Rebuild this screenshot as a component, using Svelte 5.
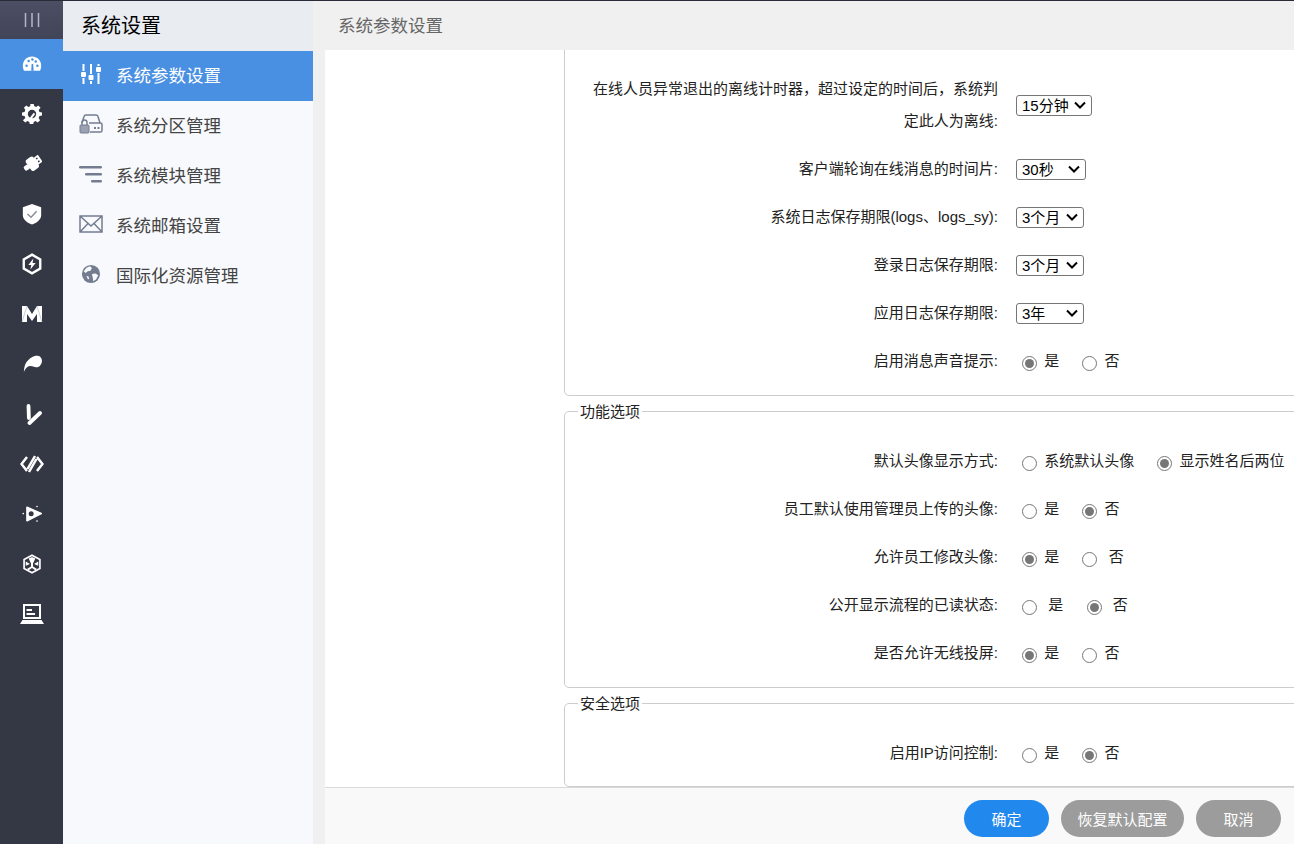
<script>
  const menu = [
    { name: '系统参数设置', icon: 'sliders', active: true },
    { name: '系统分区管理', icon: 'drive' },
    { name: '系统模块管理', icon: 'filter' },
    { name: '系统邮箱设置', icon: 'mail' },
    { name: '国际化资源管理', icon: 'globe' }
  ];

  const general = [
    { label: '在线人员异常退出的离线计时器\uFF0C超过设定的时间后\uFF0C系统判定此人为离线:', value: '15分钟', cls: 'w76', options: ['5分钟', '15分钟', '30分钟'] },
    { label: '客户端轮询在线消息的时间片:', value: '30秒', cls: 'w70', options: ['10秒', '30秒', '60秒'] },
    { label: '系统日志保存期限(logs、logs_sy):', value: '3个月', cls: 'w68', options: ['1个月', '3个月', '6个月'] },
    { label: '登录日志保存期限:', value: '3个月', cls: 'w68', options: ['1个月', '3个月', '6个月'] },
    { label: '应用日志保存期限:', value: '3年', cls: 'w68', options: ['1年', '3年', '5年'] }
  ];

  const features = [
    { id: 'avatar', label: '默认头像显示方式:', a: '系统默认头像', b: '显示姓名后两位', on: 'b' },
    { id: 'upload', label: '员工默认使用管理员上传的头像:', a: '是', b: '否', on: 'b' },
    { id: 'edit', label: '允许员工修改头像:', a: '是', b: '\u00a0否', on: 'a' },
    { id: 'read', label: '公开显示流程的已读状态:', a: '\u00a0是', b: '\u00a0否', on: 'b' },
    { id: 'cast', label: '是否允许无线投屏:', a: '是', b: '否', on: 'a' }
  ];
</script>

{#snippet radios(r)}
  <div class="control radios">
    <label><input type="radio" name={r.id} checked={r.on === 'a'} /> {r.a}</label>
    <label><input type="radio" name={r.id} checked={r.on === 'b'} /> {r.b}</label>
  </div>
{/snippet}

<div class="shell">
  <nav class="rail">
    <div class="toggle">
      <svg width="20" height="16" viewBox="0 0 20 16"><path d="M3.500 1v14M10 1v14M16.500 1v14" stroke="#b4b8c6" stroke-width="1.500" /></svg>
    </div>
    <a class="rail-item current" href="#dash">
      <svg width="20" height="20" viewBox="0 0 24 24"><path fill="#fff" d="M12 3C5.900 3 1 7.700 1 14c0 2.400.6 4.300 1.500 6h19c.9-1.700 1.500-3.600 1.500-6 0-6.300-4.900-11-11-11z" /><g fill="#4a90e2"><circle cx="5.500" cy="14" r="1.500" /><circle cx="8" cy="8.500" r="1.500" /><circle cx="12.500" cy="6.500" r="1.500" /><circle cx="18.500" cy="14" r="1.500" /><circle cx="16.500" cy="9" r="1.500" /><path d="M11 20l.6-8h1.800l.6 8z" /></g></svg>
    </a>
    <a class="rail-item" href="#gear">
      <svg width="20" height="20" viewBox="0 0 24 24"><path fill="#fff" d="M10 1h4l.6 3 2.300 1 2.600-1.700 2.800 2.800L20 8.700l1 2.300 3 .6v3.800l-3 .6-1 2.300 1.700 2.600-2.800 2.800-2.600-1.700-2.300 1-.6 3h-4l-.6-3-2.300-1-2.600 1.700-2.800-2.800L4 18.300 3 16l-3-.6v-3.800l3-.6 1-2.300-1.700-2.600 2.800-2.800L7.700 5 10 4z" transform="translate(0 -1.500)" /><circle cx="12" cy="12" r="5" fill="#343744" /><path d="M9 17l5-6.500 1.800 1.400-4.500 6.500z" fill="#fff" /></svg>
    </a>
    <a class="rail-item" href="#plug">
      <svg width="20" height="20" viewBox="0 0 24 24"><g transform="rotate(55 12 12)" fill="#fff"><rect x="7" y="0" width="10" height="8" /><rect x="4" y="6" width="16" height="11" rx="3" /><rect x="9" y="16" width="6" height="7" rx="2" /></g><g transform="rotate(55 12 12)" fill="#343744"><rect x="9" y="2.500" width="1.800" height="2" /><rect x="13.200" y="2.500" width="1.800" height="2" /></g></svg>
    </a>
    <a class="rail-item" href="#shield">
      <svg width="22" height="22" viewBox="0 0 24 24"><path fill="#fff" d="M12 1l10 3.500V13c0 5-4.500 8.500-10 10.500C6.500 21.500 2 18 2 13V4.500z" /><path d="M7 12l4 3.500 6-6.500" fill="none" stroke="#8a8d99" stroke-width="1.600" /></svg>
    </a>
    <a class="rail-item" href="#hex">
      <svg width="22" height="22" viewBox="0 0 24 24"><path fill="none" stroke="#fff" stroke-width="2.600" d="M12 1.800l9 5.200v10l-9 5.200L3 17V7z" /><path fill="#fff" d="M13.500 6L8 13h3.200l-1 5L16 11h-3.400z" /></svg>
    </a>
    <a class="rail-item" href="#m">
      <svg width="24" height="20" viewBox="0 0 24 20"><path fill="#fff" d="M2 2h5l5 8 5-8h5v16h-5v-8l-5 7-5-7v8H2z" /><path d="M7 2L2 18M17 2l5 16" stroke="#a9acb6" stroke-width=".6" /></svg>
    </a>
    <a class="rail-item" href="#feather">
      <svg width="20" height="20" viewBox="0 0 24 24"><path fill="#fff" d="M2.200 21.500C2.500 15 4 11 6.500 8.500 9 5 14 1.500 19 2c3.500.3 5.500 4 4.800 7.500C23 13.500 20 16.300 17 16c-3-.2-5-2-7.500-1.500-3 .5-5.500 3-7.300 7z" /></svg>
    </a>
    <a class="rail-item" href="#v">
      <svg width="20" height="24" viewBox="0 0 20 24"><path fill="none" stroke="#fff" stroke-width="3.800" stroke-linecap="round" d="M6.500 4l.4 12M7.500 21L18 11" /></svg>
    </a>
    <a class="rail-item" href="#code">
      <svg width="24" height="20" viewBox="0 0 24 20"><path fill="none" stroke="#fff" stroke-width="2.500" d="M7 3L1.500 10 7 17M17 3l5.500 7-5.500 7M15 2L7.500 15M16.500 5L9 18" /></svg>
    </a>
    <a class="rail-item" href="#play">
      <svg width="20" height="20" viewBox="0 0 24 24"><path fill="#fff" stroke="#fff" stroke-width="2" stroke-linejoin="round" d="M6 4l17 7.500L6 20z" /><circle cx="11" cy="11.800" r="3" fill="#343744" /><g fill="#fff"><circle cx="1.500" cy="11.500" r="1" /><circle cx="18" cy="3" r="1" /><circle cx="18" cy="20.500" r="1" /></g></svg>
    </a>
    <a class="rail-item" href="#cube">
      <svg width="20" height="20" viewBox="0 0 24 24"><path fill="none" stroke="#fff" stroke-width="2" d="M12 1.500l9.500 5.200v10.600L12 22.500l-9.500-5.200V6.700z" /><path fill="#fff" d="M8 5.500L12 3.500l4 2-2.800 6V15l4.800 3-2 1.500-4-2.800-4 2.800-2-1.500 4.800-3v-3.500z" /><path fill="#fff" d="M4.500 9l5 3-5 2zM19.500 9l-5 3 5 2z" /></svg>
    </a>
    <a class="rail-item" href="#laptop">
      <svg width="24" height="22" viewBox="0 0 24 22"><path fill="#fff" d="M3 1h18v15H3zM2.500 17h19L24 21H0z" /><path fill="#343744" d="M5 3h14v11H5z" /><path fill="#fff" d="M6.500 6H12v2H6.500zM6.500 10H15v2H6.500z" /></svg>
    </a>
  </nav>

  <aside class="side">
    <div class="side-title">系统设置</div>
    {#each menu as m}
      <a class="side-item" class:active={m.active} href="#menu">
        <span class="side-icon">
          {#if m.icon === 'sliders'}
            <svg width="24" height="24" viewBox="0 0 24 24"><path fill="none" stroke="#fff" stroke-width="2" d="M4.500 2v7M4.500 16v6M12 2v10M12 19v3M19.500 2v2M19.500 11v11" /><g fill="#fff"><rect x="2" y="10" width="5" height="5" rx="1" /><rect x="9.500" y="13" width="5" height="5" rx="1" /><rect x="17" y="5" width="5" height="5" rx="1" /></g></svg>
          {:else if m.icon === 'drive'}
            <svg width="24" height="22" viewBox="0 0 24 22"><g fill="none" stroke="#747c90" stroke-width="1.500"><path d="M3 10l2-6.500Q5.400 2 7 2h10q1.600 0 2 1.500L21 10" /><path d="M10 10h11.500q1.500 0 1.500 1.500V17.500q0 1.500-1.500 1.500H11" /></g><rect x="1" y="12" width="9" height="8" rx="1" fill="#9aa1b2" stroke="#747c90" /><path d="M3 12V9.500a2.500 2.500 0 0 1 5 0V12" fill="none" stroke="#747c90" stroke-width="1.400" /><g fill="#747c90"><rect x="15" y="14" width="2" height="2" /><rect x="18.500" y="14" width="2" height="2" /></g></svg>
          {:else if m.icon === 'filter'}
            <svg width="24" height="22" viewBox="0 0 24 22"><g fill="#747c90"><rect x="0" y="3" width="23" height="2.600" rx="1.300" /><rect x="6" y="10" width="17" height="2.600" rx="1.300" /><rect x="12" y="17" width="11" height="2.600" rx="1.300" /></g></svg>
          {:else if m.icon === 'mail'}
            <svg width="24" height="20" viewBox="0 0 24 20"><path fill="none" stroke="#747c90" stroke-width="1.500" d="M1 2h22v16H1zM1 2l11 10L23 2M1 18l8-8.500M23 18l-8-8.500" /></svg>
          {:else}
            <svg width="20" height="20" viewBox="0 0 22 22"><circle cx="11" cy="11" r="10" fill="#747c90" /><path fill="#f7f9fc" d="M6 4l4-1.500 2 2-1.500 3-3 .5L5 10 3 8zM12 11l4-.5 3 2-2.500 4.500-3 2-.5-3.500zM6 13l2.500 1 .5 3-2-1z" /></svg>
          {/if}
        </span>
        <span>{m.name}</span>
      </a>
    {/each}
  </aside>

  <main class="main">
    <header class="crumb">系统参数设置</header>
    <div class="scroll">
      <form class="form">
        <fieldset class="group first">
          {#each general as g}
            <div class="row">
              <div class="label">{g.label}</div>
              <div class="control">
                <select class={g.cls} value={g.value}>
                  {#each g.options as o}
                    <option>{o}</option>
                  {/each}
                </select>
              </div>
            </div>
          {/each}
          <div class="row">
            <div class="label">启用消息声音提示:</div>
            {@render radios({ id: 'sound', a: '是', b: '否', on: 'a' })}
          </div>
        </fieldset>

        <fieldset class="group">
          <legend>功能选项</legend>
          {#each features as f}
            <div class="row">
              <div class="label">{f.label}</div>
              {@render radios(f)}
            </div>
          {/each}
        </fieldset>

        <fieldset class="group last">
          <legend>安全选项</legend>
          <div class="row">
            <div class="label">启用IP访问控制:</div>
            {@render radios({ id: 'ip', a: '是', b: '否', on: 'b' })}
          </div>
        </fieldset>
      </form>
    </div>
    <footer class="bar">
      <button type="button" class="btn primary">确定</button>
      <button type="button" class="btn">恢复默认配置</button>
      <button type="button" class="btn">取消</button>
    </footer>
  </main>
</div>

<style>
  :global(body) {
    margin: 0;
    background: #f0f0f0;
    font-family: 'Liberation Sans', 'Noto Sans CJK SC', sans-serif;
    overflow: hidden;
  }

  .shell {
    display: flex;
    height: 843px;
    border-top: 1px solid #2a2b38;
    overflow: hidden;
  }

  .rail {
    width: 63px;
    flex: none;
    background: #343744;
  }

  .toggle {
    height: 38px;
    display: flex;
    align-items: center;
    justify-content: center;
    background: linear-gradient(#4c4f63, #424558);
  }

  .rail-item {
    height: 50px;
    display: flex;
    align-items: center;
    justify-content: center;
  }

  .current {
    background: #4a90e2;
  }

  .side {
    width: 250px;
    flex: none;
    background: #f7f9fc;
  }

  .side-title {
    height: 50px;
    line-height: 51px;
    padding-left: 18px;
    font-size: 20px;
    color: #000;
    background: #e9ecf1;
  }

  .side-item {
    box-sizing: border-box;
    height: 50px;
    display: flex;
    align-items: center;
    padding: 0 0 4px 16px;
    font-size: 17.500px;
    color: #444;
    text-decoration: none;
  }

  .side-item.active {
    background: #4a90e2;
    color: #fff;
  }

  .side-icon {
    width: 24px;
    margin-right: 13px;
    display: flex;
    justify-content: center;
  }

  .main {
    flex: 1;
    min-width: 0;
    display: flex;
    flex-direction: column;
    padding-left: 12px;
  }

  .crumb {
    height: 49px;
    line-height: 50px;
    padding-left: 13px;
    font-size: 17.500px;
    color: #666;
  }

  .scroll {
    flex: 1;
    min-height: 0;
    overflow: hidden;
    background: #fff;
  }

  .form {
    margin: -11px 0 0 239px;
    width: 960px;
  }

  .group {
    margin: 0 0 4px;
    padding: 14px 0 10px 25px;
    border: 1px solid #ccc;
    border-radius: 5px;
    min-width: 0;
  }

  .group.first {
    padding-top: 25px;
    margin-bottom: 4px;
  }

  .group.last {
    padding-bottom: 9px;
  }

  legend {
    margin-left: -12px;
    padding: 0 2px 2px;
    font-size: 15px;
    color: #222;
  }

  .row {
    display: grid;
    grid-template-columns: 408px 1fr;
    column-gap: 18px;
    align-items: center;
    padding: 8px 0;
    font-size: 15px;
    line-height: 32px;
    color: #222;
  }

  .label {
    text-align: right;
  }

  select {
    display: block;
    box-sizing: border-box;
    height: 21px;
    padding: 0 0 0 5px;
    appearance: none;
    border: 1px solid #767676;
    border-radius: 3px;
    font: 15px 'Liberation Sans', 'Noto Sans CJK SC', sans-serif;
    color: #000;
    background: #fff url("data:image/svg+xml,%3Csvg xmlns='http://www.w3.org/2000/svg' width='12' height='8' viewBox='0 0 12 8'%3E%3Cpath d='M1 1.500l5 5 5-5' fill='none' stroke='%23000' stroke-width='2'/%3E%3C/svg%3E") no-repeat right 5px center;
  }

  .w76 {
    width: 76px;
  }

  .w70 {
    width: 70px;
  }

  .w68 {
    width: 68px;
  }

  .radios {
    padding-left: 1px;
  }

  .control label {
    margin-right: 14px;
  }

  input[type='radio'] {
    width: 15px;
    height: 15px;
    vertical-align: -5px;
    accent-color: #767676;
  }

  .bar {
    height: 56px;
    flex: none;
    display: flex;
    justify-content: flex-end;
    align-items: center;
    gap: 12px;
    padding: 0 13px 0 0;
    background: #f9f9f9;
    border-top: 1px solid #d9d9d9;
  }

  .btn {
    height: 37px;
    min-width: 85px;
    padding: 0 16.500px;
    margin-top: 5px;
    border: 0;
    border-radius: 18.500px;
    background: #9c9c9c;
    color: #fff;
    font: 15px 'Liberation Sans', 'Noto Sans CJK SC', sans-serif;
  }

  .primary {
    background: #2188ee;
  }
</style>
